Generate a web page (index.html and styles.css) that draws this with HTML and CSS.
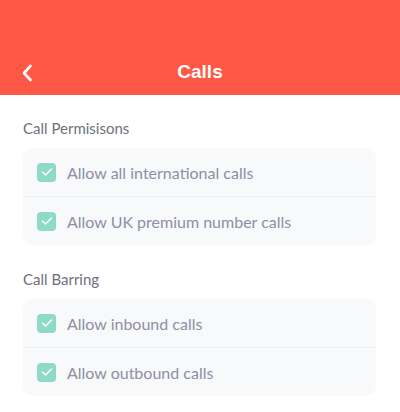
FILE: index.html
```html
<!DOCTYPE html>
<html lang="en">
<head>
    <meta charset="UTF-8">
    <title>Calls</title>
    <link rel="stylesheet" href="styles.css">
</head>
<body>

<div class="header">
    <button class="back" aria-label="Back">
        <svg width="12" height="18" viewBox="0 0 12 18">
            <path d="M9.5 2 L3 9 L9.5 16" fill="none" stroke="white" stroke-width="2.6" stroke-linecap="round" stroke-linejoin="round"/>
        </svg>
    </button>
    <div class="title">Calls</div>
</div>

<div class="content">
    <div class="section-label">Call Permisisons</div>
    <div class="card">
        <label class="row">
            <span class="check"><svg width="12" height="10" viewBox="0 0 12 10"><path d="M1.5 5 L4.5 8 L10.5 2" fill="none" stroke="white" stroke-width="1.4" stroke-linecap="round" stroke-linejoin="round"/></svg></span>
            Allow all international calls
        </label>
        <label class="row">
            <span class="check"><svg width="12" height="10" viewBox="0 0 12 10"><path d="M1.5 5 L4.5 8 L10.5 2" fill="none" stroke="white" stroke-width="1.4" stroke-linecap="round" stroke-linejoin="round"/></svg></span>
            Allow UK premium number calls
        </label>
    </div>

    <div class="section-label second">Call Barring</div>
    <div class="card">
        <label class="row">
            <span class="check"><svg width="12" height="10" viewBox="0 0 12 10"><path d="M1.5 5 L4.5 8 L10.5 2" fill="none" stroke="white" stroke-width="1.4" stroke-linecap="round" stroke-linejoin="round"/></svg></span>
            Allow inbound calls
        </label>
        <label class="row">
            <span class="check"><svg width="12" height="10" viewBox="0 0 12 10"><path d="M1.5 5 L4.5 8 L10.5 2" fill="none" stroke="white" stroke-width="1.4" stroke-linecap="round" stroke-linejoin="round"/></svg></span>
            Allow outbound calls
        </label>
    </div>
</div>

</body>
</html>
```

FILE: styles.css
```css
body {
    font-family: Lato, Inter, sans-serif;
    background: #ffffff;
    margin: 0;
    padding: 0;
}

.header {
    background-color: #ff5745;
    height: 95px;
    position: relative;
    display: flex;
    align-items: flex-end;
    justify-content: center;
    box-sizing: border-box;
    padding-bottom: 11px;
}

.header .back {
    position: absolute;
    left: 17px;
    bottom: 12px;
    background: none;
    border: none;
    padding: 0;
    width: 20px;
    height: 20px;
    display: flex;
    align-items: center;
    justify-content: center;
    cursor: pointer;
}

.header .title {
    color: white;
    font-family: "Liberation Sans", Arial, sans-serif;
    font-size: 19px;
    font-weight: bold;
    line-height: 24px;
}

.content {
    padding: 23px 23px 0 23px;
}

.section-label {
    font-size: 15px;
    line-height: 20px;
    color: #6f707c;
    margin-bottom: 10px;
}

.section-label.second {
    margin-top: 24px;
}

.card {
    background: #f8f9fb;
    border-radius: 10px;
    margin-right: 1px;
}

.row {
    height: 48px;
    display: flex;
    align-items: center;
    padding-left: 14px;
    gap: 11px;
    font-size: 16px;
    color: #8e8fa4;
    cursor: pointer;
}

.row + .row {
    border-top: 1px solid #eef0f3;
}

.check {
    width: 19px;
    height: 19px;
    border-radius: 4px;
    background: #8fd9c9;
    display: flex;
    align-items: center;
    justify-content: center;
}
```
